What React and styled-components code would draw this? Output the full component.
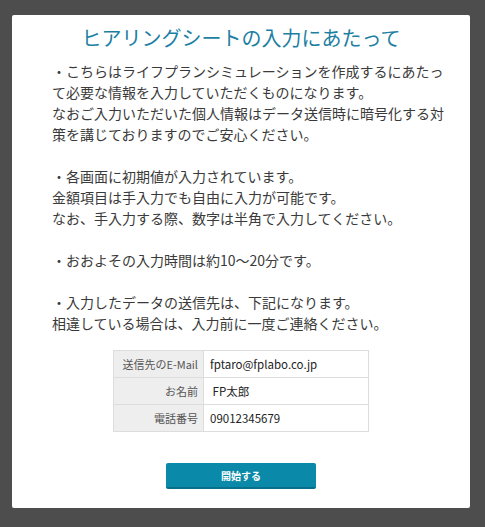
import styled, { createGlobalStyle } from "styled-components";

const Global = createGlobalStyle`
  body {
    margin: 0;
    background: #4d4d4d;
    font-family: "Noto Sans CJK JP", "Noto Sans", sans-serif;
  }
`;

const Card = styled.div`
  box-sizing: border-box;
  width: 458px;
  height: 493px;
  margin: 15px 0 0 12px;
  padding: 8px 22px 0 40px;
  background: #fff;
  border-radius: 2px;
  display: flex;
  flex-direction: column;
`;

const Title = styled.h1`
  margin: 0 0 8px -18px;
  font-size: 20px;
  font-weight: 400;
  line-height: 30px;
  text-align: center;
  color: #1c7fa3;
`;

const Body = styled.p`
  margin: 0;
  font-size: 14px;
  line-height: 21px;
  color: #3a3a3a;
`;

const Table = styled.table`
  margin: 16px 0 0 61px;
  width: 256px;
  border-collapse: collapse;
  font-size: 11.5px;
`;

const Label = styled.th`
  width: 84px;
  height: 26px;
  padding: 0 5px 0 0;
  border: 1px solid #ddd;
  background: #eeeeee;
  color: #555;
  font-size: 11px;
  font-weight: 400;
  text-align: right;
`;

const Value = styled.td`
  padding: 0 6px;
  border: 1px solid #ddd;
  color: #222;
`;

const Button = styled.button`
  align-self: flex-start;
  margin: 31px 0 0 114px;
  width: 150px;
  height: 26px;
  border: none;
  border-bottom: 2px solid #07708a;
  border-radius: 2px;
  background: #0a8aa8;
  color: #fff;
  font-family: inherit;
  font-size: 10px;
  font-weight: 700;
  cursor: pointer;
`;

const rows = [
  ["送信先のE-Mail", "fptaro@fplabo.co.jp"],
  ["お名前", "\u00a0FP太郎"],
  ["電話番号", "09012345679"],
];

export default function App() {
  return (
    <>
      <Global />
      <Card>
        <Title>ヒアリングシートの入力にあたって</Title>
        <Body>
          ・こちらはライフプランシミュレーションを作成するにあたって必要な情報を入力していただくものになります。
          <br />
          なおご入力いただいた個人情報はデータ送信時に暗号化する対策を講じておりますのでご安心ください。
          <br />
          <br />
          ・各画面に初期値が入力されています。
          <br />
          金額項目は手入力でも自由に入力が可能です。
          <br />
          なお、手入力する際、数字は半角で入力してください。
          <br />
          <br />
          ・おおよその入力時間は約10～20分です。
          <br />
          <br />
          ・入力したデータの送信先は、下記になります。
          <br />
          相違している場合は、入力前に一度ご連絡ください。
        </Body>
        <Table>
          <tbody>
            {rows.map(([k, v]) => (
              <tr key={k}>
                <Label>{k}</Label>
                <Value>{v}</Value>
              </tr>
            ))}
          </tbody>
        </Table>
        <Button>開始する</Button>
      </Card>
    </>
  );
}
